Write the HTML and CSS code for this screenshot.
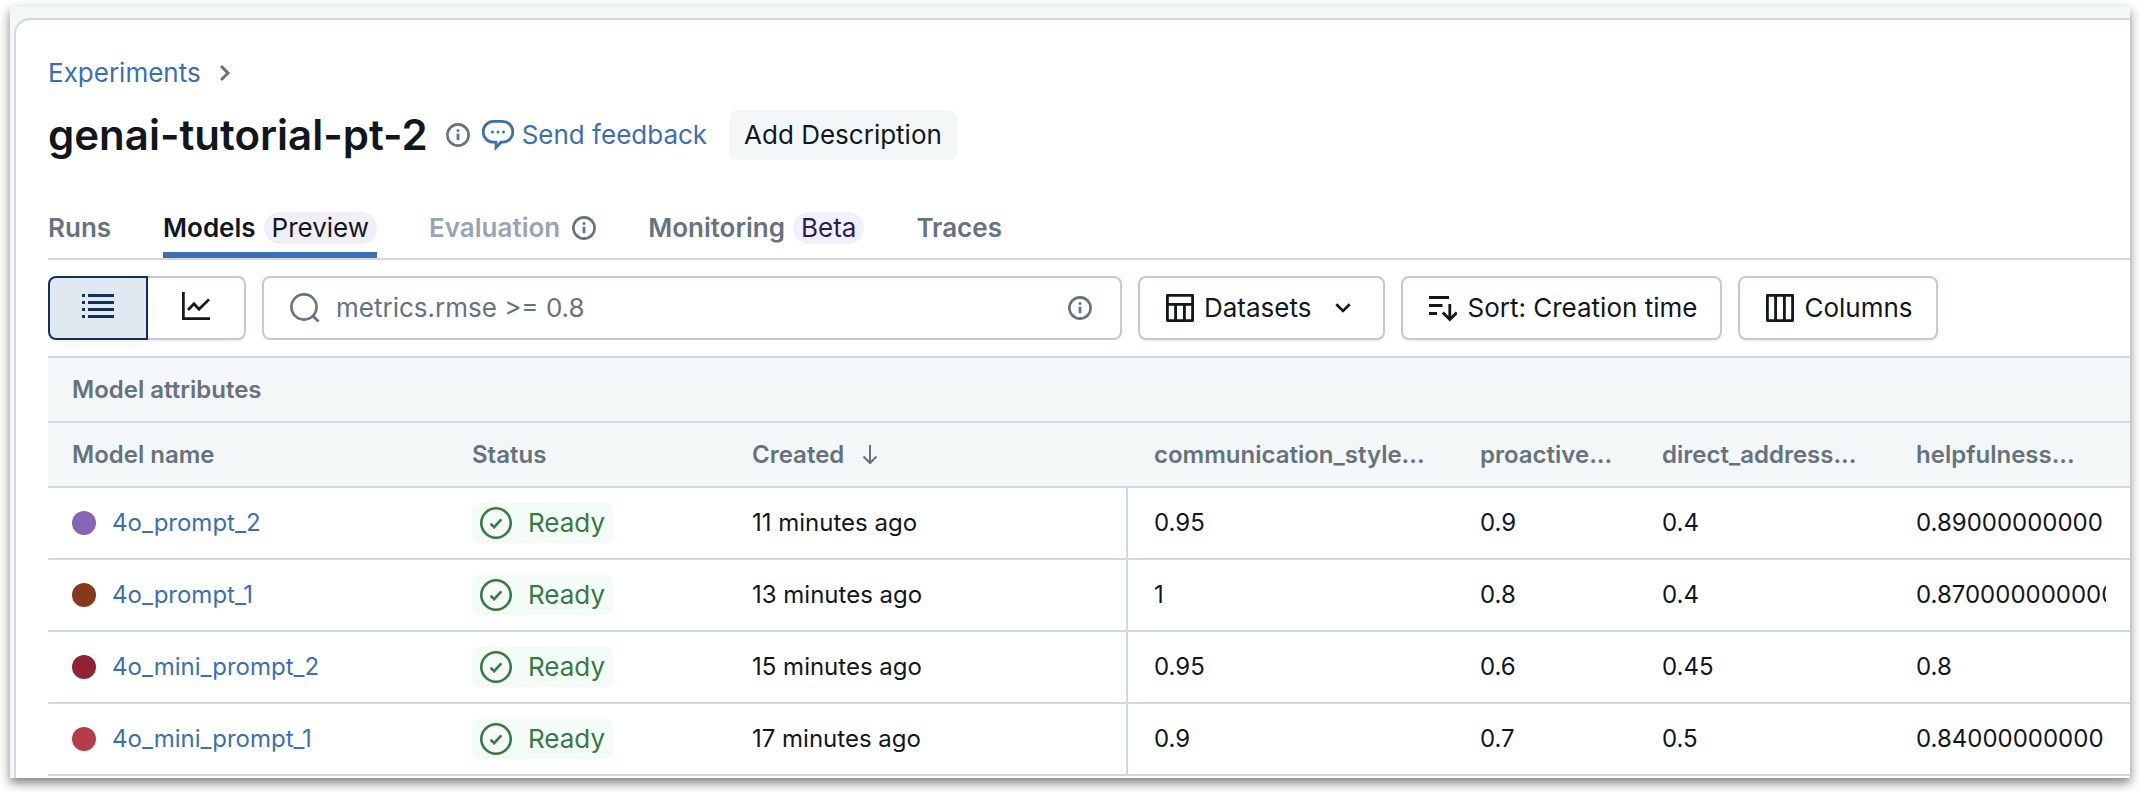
FILE: index.html
```
<!DOCTYPE html>
<html lang="en">
<head>
<meta charset="utf-8">
<title>genai-tutorial-pt-2</title>
<link rel="stylesheet" href="styles.css">
</head>
<body>
<svg class="sprite" aria-hidden="true">
  <symbol id="info" viewBox="0 0 24 24">
    <circle cx="12" cy="12" r="10.6" fill="none" stroke="currentColor" stroke-width="2.6"/>
    <circle cx="12" cy="7.4" r="1.5" fill="currentColor"/>
    <path d="M12 10.6v6.6" stroke="currentColor" stroke-width="2.8"/>
  </symbol>
  <symbol id="check" viewBox="0 0 32 32">
    <circle cx="16" cy="16" r="14.7" fill="none" stroke="currentColor" stroke-width="2.6"/>
    <path d="M10.6 16.6l3.600 3.600 7.200-7.800" fill="none" stroke="currentColor" stroke-width="2.6"/>
  </symbol>
</svg>
<div class="window">
  <main class="panel">
    <nav class="breadcrumb" aria-label="Breadcrumb">
      <a href="#experiments">Experiments</a>
      <svg class="crumb-arrow" viewBox="0 0 12 18" aria-hidden="true"><path d="M2 2l7 7-7 7" fill="none" stroke="currentColor" stroke-width="3"/></svg>
    </nav>

    <header class="heading">
      <h1>genai-tutorial-pt-2</h1>
      <svg class="icon-info" role="img" aria-label="Info"><use href="#info"/></svg>
      <a class="feedback" href="#feedback">
        <svg class="bubble" viewBox="0 0 32 32" aria-hidden="true">
          <path d="M11.500 2.400h9a10 10 0 0 1 0 20.800h-1.500L14 28.400v-5.200h-2.500a10 10 0 0 1 0-20.800z" fill="none" stroke="currentColor" stroke-width="2.800"/>
          <g fill="currentColor"><circle cx="10.500" cy="13" r="1.500"/><circle cx="16" cy="13" r="1.500"/><circle cx="21.500" cy="13" r="1.500"/></g>
        </svg>
        Send feedback
      </a>
      <button class="describe" type="button">Add Description</button>
    </header>

    <nav class="tabs" aria-label="Experiment sections">
      <a class="tab" href="#runs">Runs</a>
      <a class="tab active" href="#models" aria-current="page">Models <span class="tag tag-preview">Preview</span></a>
      <a class="tab disabled" href="#evaluation">Evaluation <svg class="icon-info" role="img" aria-label="Info"><use href="#info"/></svg></a>
      <a class="tab" href="#monitoring">Monitoring <span class="tag tag-beta">Beta</span></a>
      <a class="tab" href="#traces">Traces</a>
    </nav>

    <div class="toolbar">
      <div class="toggle" role="group" aria-label="View">
        <button class="toggle-item selected" type="button" aria-label="List view" aria-pressed="true">
          <svg class="icon" viewBox="0 0 32 28" aria-hidden="true"><path d="M6 3.500H32M6 10.500H32M6 17.500H32M6 24.500H32M0 3.500h3M0 10.500h3M0 17.500h3M0 24.500h3" stroke="currentColor" stroke-width="2.800"/></svg>
        </button>
        <button class="toggle-item" type="button" aria-label="Chart view" aria-pressed="false">
          <svg class="icon" viewBox="0 0 28 28" aria-hidden="true"><path d="M1.400 0v26.600H28M6 18l6-6.200 5 5.400L27 7.400" fill="none" stroke="currentColor" stroke-width="2.700"/></svg>
        </button>
      </div>
      <label class="search">
        <svg class="search-icon" viewBox="0 0 30 30" aria-hidden="true"><circle cx="14" cy="14" r="12.600" fill="none" stroke="currentColor" stroke-width="2.600"/><path d="M22.500 22.500l6 6" stroke="currentColor" stroke-width="2.800"/></svg>
        <input type="text" placeholder="metrics.rmse &gt;= 0.8" aria-label="Filter models">
        <svg class="icon-info" role="img" aria-label="Info"><use href="#info"/></svg>
      </label>
      <button class="button" type="button">
        <svg class="icon" viewBox="0 0 28 28" aria-hidden="true"><path d="M1.400 1.400h25.200v25.200H1.400zM1.400 10.400h25.200M9.600 10.400v16.200M18.400 10.400v16.200" fill="none" stroke="currentColor" stroke-width="2.800" stroke-linejoin="round"/></svg>
        Datasets
        <svg class="caret" viewBox="0 0 16 12" aria-hidden="true"><path d="M1.300 2.200L8 8.900l6.700-6.700" fill="none" stroke="currentColor" stroke-width="2.700"/></svg>
      </button>
      <button class="button" type="button">
        <svg class="icon" viewBox="0 0 28 28" aria-hidden="true"><path d="M0 3.500h20M0 11.500h13.500M0 19.500h8M20.800 10v15M13.800 18.600l7 7 7-7" fill="none" stroke="currentColor" stroke-width="2.800"/></svg>
        Sort: Creation time
      </button>
      <button class="button" type="button">
        <svg class="icon" viewBox="0 0 28 28" aria-hidden="true"><path d="M1.400 1.400h25.200v25.200H1.400zM9.600 1.400v25.200M18.400 1.400v25.200" fill="none" stroke="currentColor" stroke-width="2.800" stroke-linejoin="round"/></svg>
        Columns
      </button>
    </div>

    <table class="models">
      <colgroup>
        <col class="col-name"><col class="col-status"><col class="col-created">
        <col class="col-style"><col class="col-proactive"><col class="col-direct"><col>
      </colgroup>
      <thead>
        <tr><th colspan="7" scope="colgroup">Model attributes</th></tr>
        <tr>
          <th scope="col">Model name</th>
          <th scope="col">Status</th>
          <th scope="col" aria-sort="descending"><span class="sorted">Created <svg class="sort-arrow" viewBox="0 0 16 20" aria-hidden="true"><path d="M8 0v18M1.500 11.500L8 18l6.500-6.500" fill="none" stroke="currentColor" stroke-width="2"/></svg></span></th>
          <th scope="col" class="metric-first">communication_style...</th>
          <th scope="col">proactive...</th>
          <th scope="col">direct_address...</th>
          <th scope="col">helpfulness...</th>
        </tr>
      </thead>
      <tbody>
        <tr>
          <td><a class="model" href="#m1"><span class="dot purple"></span>4o_prompt_2</a></td>
          <td><span class="status"><svg class="check"><use href="#check"/></svg>Ready</span></td>
          <td>11 minutes ago</td>
          <td class="metric-first">0.95</td><td>0.9</td><td>0.4</td>
          <td><div class="clip">0.89000000000</div></td>
        </tr>
        <tr>
          <td><a class="model" href="#m2"><span class="dot brown"></span>4o_prompt_1</a></td>
          <td><span class="status"><svg class="check"><use href="#check"/></svg>Ready</span></td>
          <td>13 minutes ago</td>
          <td class="metric-first">1</td><td>0.8</td><td>0.4</td>
          <td><div class="clip">0.870000000000</div></td>
        </tr>
        <tr>
          <td><a class="model" href="#m3"><span class="dot maroon"></span>4o_mini_prompt_2</a></td>
          <td><span class="status"><svg class="check"><use href="#check"/></svg>Ready</span></td>
          <td>15 minutes ago</td>
          <td class="metric-first">0.95</td><td>0.6</td><td>0.45</td>
          <td><div class="clip">0.8</div></td>
        </tr>
        <tr>
          <td><a class="model" href="#m4"><span class="dot red"></span>4o_mini_prompt_1</a></td>
          <td><span class="status"><svg class="check"><use href="#check"/></svg>Ready</span></td>
          <td>17 minutes ago</td>
          <td class="metric-first">0.9</td><td>0.7</td><td>0.5</td>
          <td><div class="clip">0.84000000000</div></td>
        </tr>
      </tbody>
    </table>
  </main>
</div>
</body>
</html>
```
FILE: styles.css
```
* { box-sizing: border-box; }

body {
  margin: 0;
  padding: 6px 10px 14px;
  background: #fff;
  color: #11171c;
  font: 26px/32px Inter, "Liberation Sans", sans-serif;
}

a { color: #3b6fb0; text-decoration: none; }
button, input { font: inherit; color: inherit; }
svg { display: block; flex: none; }
.sprite { position: absolute; width: 0; height: 0; }

.window {
  padding: 12px 0 0 4px;
  background: #f4f7f8;
  box-shadow: 0 5px 10px rgba(0, 0, 0, .5);
}
.panel {
  padding: 37px 0 2px 32px;
  background: #fff;
  border: solid #d1d8e0;
  border-width: 2px 0 0 2px;
  border-radius: 16px 0 0 0;
}

.breadcrumb { display: flex; align-items: center; gap: 18px; }
.crumb-arrow { width: 12px; height: 18px; color: #66727e; }

.heading { display: flex; align-items: center; margin-top: 21px; }
h1 { margin: 0 18px 0 0; font-size: 42px; line-height: 50px; font-weight: 600; }
.icon-info { width: 24px; height: 24px; color: #66727e; }
.feedback { display: flex; align-items: center; gap: 8px; margin: 0 22px 0 12px; }
.bubble { width: 32px; height: 32px; }
.describe {
  height: 50px;
  padding: 0 15px;
  background: #f4f7f8;
  border: 0;
  border-radius: 8px;
}

.tabs { display: flex; gap: 52px; margin-top: 52px; border-bottom: 2px solid #d1d8e0; }
.tab {
  display: flex;
  align-items: center;
  gap: 8px;
  padding-bottom: 8px;
  border-bottom: 6px solid transparent;
  color: #66727e;
  font-weight: 600;
}
.tab.active { color: #11171c; border-color: #3b6fb0; }
.tab.disabled { color: #98a4b3; gap: 12px; }
.tag { padding: 0 8px; border-radius: 16px; font-weight: 400; }
.tag-preview { background: #f1eff5; color: #11171c; }
.tag-beta { background: #f3f0fe; color: #2b1d54; }

.toolbar { display: flex; gap: 16px; padding: 16px 0; }
.toggle { display: flex; border-radius: 8px; box-shadow: 0 2px 1px rgba(0, 0, 0, .05); }
.toggle-item {
  display: grid;
  place-items: center;
  width: 98px;
  height: 64px;
  padding: 0 0 4px;
  background: #fff;
  border: 2px solid #c0cad4;
  border-left: 0;
  border-radius: 0 8px 8px 0;
}
.toggle-item.selected {
  width: 100px;
  background: #e0e8f2;
  border: 2px solid #12305a;
  border-radius: 8px 0 0 8px;
  color: #12305a;
}
.icon { width: 28px; height: 28px; }
.toggle-item.selected .icon { width: 32px; }
.search {
  display: flex;
  align-items: center;
  flex: 0 1 860px;
  gap: 16px;
  height: 64px;
  padding: 0 28px 0 26px;
  border: 2px solid #c0cad4;
  border-radius: 8px;
  color: #66727e;
}
.search input { flex: 1; min-width: 0; padding: 0; border: 0; outline: 0; background: none; }
.search input::placeholder { color: #66727e; opacity: 1; }
.search-icon { width: 30px; height: 30px; }
.button {
  display: flex;
  align-items: center;
  gap: 10px;
  height: 64px;
  padding: 0 23px 0 26px;
  background: #fff;
  border: 2px solid #c0cad4;
  border-radius: 8px;
  box-shadow: 0 2px 1px rgba(0, 0, 0, .05);
  white-space: nowrap;
}
.caret { width: 16px; height: 12px; margin: 0 9px 0 14px; }

.models {
  width: 100%;
  table-layout: fixed;
  border-spacing: 0;
  border-top: 2px solid #d1d8e0;
  font-size: 24px;
  line-height: 32px;
}
.col-name { width: 400px; }
.col-status { width: 280px; }
.col-created { width: 398px; }
.col-style { width: 330px; }
.col-proactive { width: 182px; }
.col-direct { width: 254px; }
.models th, .models td {
  padding: 0 24px;
  border-bottom: 2px solid #d1d8e0;
  text-align: left;
  white-space: nowrap;
}
.models th { height: 65px; background: #f4f7f8; color: #66727e; font-weight: 600; }
.models td { height: 72px; }
.models .metric-first { padding-left: 28px; }
.models td.metric-first { padding-left: 26px; border-left: 2px solid #d1d8e0; }
.sorted { display: flex; align-items: center; gap: 18px; }
.sort-arrow { width: 16px; height: 20px; }
.model { display: flex; align-items: center; gap: 16px; }
.dot { width: 24px; height: 24px; border-radius: 50%; }
.purple { background: #8664b8; }
.brown { background: #873a1b; }
.maroon { background: #8f2233; }
.red { background: #b53d49; }
.status {
  display: inline-flex;
  align-items: center;
  gap: 16px;
  height: 40px;
  padding: 0 8px;
  background: #f3fbf6;
  border-radius: 8px;
  color: #3a7844;
  font-size: 26px;
  vertical-align: middle;
}
.check { width: 32px; height: 32px; }
.clip { overflow: hidden; }
```
